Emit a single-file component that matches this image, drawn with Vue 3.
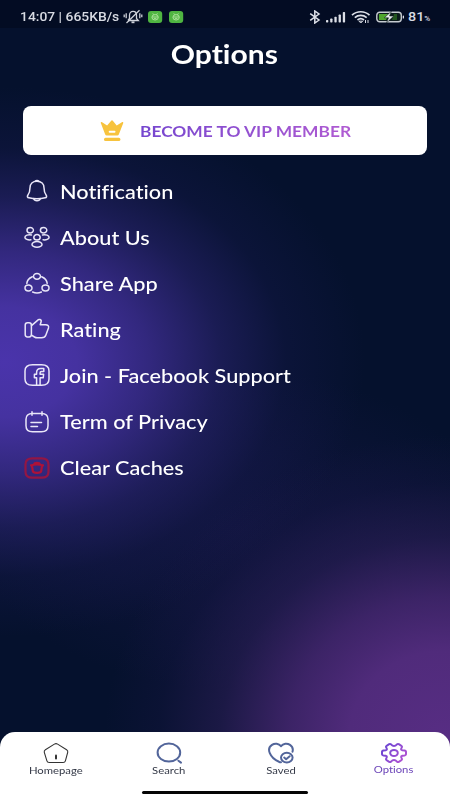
<template>
  <main class="tela">

    <!-- STATUS -->
    <header class="status">
      <div class="status__lado">
        <span class="status__hora">14:07 | 665KB/s</span>
        <svg class="status__mudo" width="20" height="16" viewBox="0 0 20 16" fill="none" stroke="#cfd2da" stroke-width="1.3">
          <path d="M5 11.5 6.5 9.5V6.2C6.5 3.8 8 2.4 10 2.4s3.5 1.4 3.5 3.8v3.3l1.8 2H5" />
          <path d="M8.5 13.3h3" stroke-width="1.8" />
          <path d="M3.5 14 16.5 1.2M3.2 4.2v5M1.2 5.5v2.7M16.8 4.2v5M18.8 5.5v2.7" />
        </svg>
        <svg v-for="n in 2" :key="n" class="status__app" width="15" height="12" viewBox="0 0 15 12">
          <rect width="14.2" height="12" rx="3" fill="#4fb541" />
          <g fill="none" stroke="#b4e5a3" stroke-width="0.9">
            <ellipse cx="7.1" cy="6.3" rx="3.2" ry="2.7" />
            <path d="M4.100 6h6M4.800 2.400l1 1.300M9.400 2.400l-1 1.300M5.800 7.400h2.600" />
          </g>
        </svg>
      </div>

      <div class="status__lado">
        <svg width="12" height="14" viewBox="0 0 12 14" fill="none" stroke="#dcdfe7" stroke-width="1.5">
          <path d="M1.2 3.6 10 10 5.8 13V1L10 4 1.2 10.4" />
        </svg>
        <svg class="status__sinal" width="20" height="12" viewBox="0 0 20 12" fill="#dcdfe7">
          <rect x="0" y="9" width="2.3" height="2.5" rx="0.7" />
          <rect x="4.2" y="7.6" width="2.3" height="3.9" rx="0.7" />
          <rect x="8.4" y="5.8" width="2.3" height="5.7" rx="0.7" />
          <rect x="12.6" y="3.5" width="2.3" height="8" rx="0.7" />
          <rect x="16.8" y="1" width="2.3" height="10.5" rx="0.7" />
        </svg>
        <svg class="status__wifi" width="20" height="14" viewBox="0 0 20 14" fill="none" stroke="#dcdfe7" stroke-width="1.7">
          <path d="M1 5.2c5-4.6 12.5-4.6 17.5 0M3.8 7.7c3.5-3 8.4-3 11.9 0M6.5 10c2-1.6 4.5-1.6 6.5 0" />
          <path d="M8 11.2h3.6l-1.8 1.8zM14.5 10v3M17 10v3" stroke-width="1" />
        </svg>
        <svg class="status__bateria" width="29" height="12" viewBox="0 0 29 12">
          <rect x="0.8" y="1.2" width="24.5" height="9.6" rx="3" fill="#0c1b1c" stroke="#c6cbd1" stroke-width="1.4" />
          <path d="M3 3h10l-3 6H3z" fill="#4fa52d" />
          <path d="M18 3h3v6h-5z" fill="#23561f" />
          <path d="M15.5.2 8.3 6.8h4.2L10.4 12l7.4-7h-4.2z" fill="#eef2f2" stroke="#0c1b1c" stroke-width="0.6" />
          <rect x="26.7" y="4.5" width="1.3" height="3" rx="0.6" fill="#dcdfe7" />
        </svg>
        <span class="status__carga">81<small>%</small></span>
      </div>
    </header>

    <h1 class="titulo"><span>Options</span></h1>

    <!-- VIP -->
    <button class="vip">
      <svg width="24" height="22" viewBox="0 0 24 22" fill="#f7c33e">
        <path d="M1 3.5c-.8-1 .2-2 1.1-1.3l5 3.4L11 1c.6-.9 1.4-.9 2 0l3.7 4.6 5.2-3.4c1-.6 1.8.2 1.2 1.3l-4.2 10.8c-.3.8-.8 1.2-1.6 1.2H6.7c-.8 0-1.3-.4-1.6-1.2z" />
        <rect x="4" y="17.7" width="16.4" height="3.2" rx="1.5" />
        <rect x="8.7" y="10.8" width="6.8" height="1.9" rx="0.9" fill="#fff" />
      </svg>
      <span class="vip__texto">BECOME TO VIP MEMBER</span>
    </button>

    <!-- MENU -->
    <ul class="menu">
      <li v-for="item in itens" :key="item.nome" class="menu__item">
        <svg class="menu__icone" :class="{ 'menu__icone--perigo': item.perigo }" width="28" height="24" viewBox="0 0 28 24">
          <path v-for="d in item.tracos" :key="d" :d="d" />
        </svg>
        <span class="menu__nome">{{ item.nome }}</span>
      </li>
    </ul>

    <!-- NAVEGAÇÃO -->
    <nav class="nav">
      <div class="nav__abas">
        <a v-for="aba in abas" :key="aba.nome" class="aba" :class="'aba--' + aba.tipo">
          <svg width="28" height="22" viewBox="0 0 28 22">
            <defs v-if="aba.tipo === 'ativa'">
              <linearGradient id="roxo" gradientUnits="userSpaceOnUse" x1="3" y1="2" x2="25" y2="20">
                <stop offset="0" stop-color="#6543d2" />
                <stop offset="1" stop-color="#b855d3" />
              </linearGradient>
            </defs>
            <path v-for="d in aba.tracos" :key="d" :d="d" />
          </svg>
          <span>{{ aba.nome }}</span>
        </a>
      </div>
      <div class="nav__barra"></div>
    </nav>

  </main>
</template>

<script setup>
const itens = [
  {
    nome: "Notification",
    tracos: [
      "M14 2.2c-4.4 0-7 2.8-7 6.6 0 4-.7 5.5-2.2 7.4-.9 1.2-.3 2.3 1 2.6 5.2 1.2 11.2 1.2 16.4 0 1.3-.3 1.9-1.4 1-2.6C21.7 14.3 21 12.8 21 8.8c0-3.8-2.6-6.6-7-6.6z",
      "M10.6 19.6c.5 1.5 1.8 2.2 3.4 2.2s2.9-.7 3.4-2.2",
      "M12.3 2.1c.6-.8 2.8-.8 3.4 0"
    ]
  },
  {
    nome: "About Us",
    tracos: [
      "M4 5.2a3.2 2.7 0 1 0 6.4 0a3.2 2.7 0 1 0-6.4 0",
      "M17.4 5.2a3.2 2.7 0 1 0 6.4 0a3.2 2.7 0 1 0-6.4 0",
      "M10.8 12.3a3.2 2.8 0 1 0 6.4 0a3.2 2.8 0 1 0-6.4 0",
      "M9 19.4a5 2.8 0 1 0 10 0a5 2.8 0 1 0-10 0",
      "M8.5 9.9c-3.4-.7-6.6.5-6.6 2.4s3 2.9 6 2.5",
      "M19.5 9.9c3.4-.7 6.6.5 6.6 2.4s-3 2.9-6 2.5"
    ]
  },
  {
    nome: "Share App",
    tracos: [
      "M10.5 5.3a3.5 2.9 0 1 0 7 0a3.5 2.9 0 1 0-7 0",
      "M2 17a3.5 2.9 0 1 0 7 0a3.5 2.9 0 1 0-7 0",
      "M19 17a3.5 2.9 0 1 0 7 0a3.5 2.9 0 1 0-7 0",
      "M9.3 5.7C6.1 7.1 4.1 9.3 3.8 12.4",
      "M18.7 5.7c3.2 1.4 5.2 3.6 5.5 6.7",
      "M9.6 21c2.8 1.2 6 1.2 8.8 0"
    ]
  },
  {
    nome: "Rating",
    tracos: [
      "M2.2 8.2c0-1.7.6-2.4 2.3-2.4h1.6c1.6 0 2.3.7 2.3 2.4v9.4c0 1.7-.7 2.4-2.3 2.4H4.5c-1.7 0-2.3-.7-2.3-2.4z",
      "M8.5 8.6 14.3 3.6C15.8 1.6 18.8 2.4 18.1 4.8L17.2 7.7h5.3c2.2 0 3.6 1.2 3 3.2l-2.6 7.1c-.6 1.8-2 2.8-4.3 2.8h-4.3c-1 0-2-.3-2.8-.8l-3-1.8"
    ]
  },
  {
    nome: "Join - Facebook Support",
    tracos: [
      "M9.5 1.8h9c5.2 0 7.5 1.9 7.5 6.3v7.8c0 4.4-2.3 6.3-7.5 6.3h-9C4.3 22.2 2 20.3 2 15.9V8.1c0-4.4 2.3-6.3 7.5-6.3z",
      "M13.6 22v-7.2h-2.2v-3.5h2.2V9.6c0-2.7 1.5-4 4.2-4h3v3h-2.3c-1 0-1.4.4-1.4 1.3v1.4h3.5l-.4 3.5h-3.1V22"
    ]
  },
  {
    nome: "Term of Privacy",
    tracos: [
      "M9.5 3.4h9c4.6 0 6.5 2 6.5 5.8v6.6c0 4-2 6-6.5 6h-9c-4.5 0-6.5-2-6.5-6V9.2c0-3.8 1.9-5.8 6.5-5.8z",
      "M9 1.7v3.6M19 1.7v3.6",
      "M8 12.6h10.5M8 16.4h6.5"
    ]
  },
  {
    nome: "Clear Caches",
    perigo: true,
    tracos: [
      "M9.5 2.3h9c4.9 0 7 1.9 7 6v7.4c0 4.1-2.1 6-7 6h-9c-4.9 0-7-1.9-7-6V8.3c0-4.1 2.1-6 7-6z",
      "M8 9.4c4-1.2 8-1.2 12 0M11.2 8.2c.3-1.8 5.3-1.8 5.6 0M9 9.8l.8 5.2c.4 2.4 8 2.4 8.4 0l.8-5.2"
    ]
  }
];

const abas = [
  {
    nome: "Homepage",
    tipo: "inicio",
    tracos: [
      "M12.4 2.1c1-.6 2.2-.6 3.2 0l9 5.6c1 .6 1.4 1.5 1.1 2.6l-2.3 8.5c-.3 1.2-1 1.7-2.3 1.7H7.2c-1.3 0-2-.5-2.3-1.7L2.3 10.3C2 9.2 2.4 8.3 3.4 7.7z",
      "M14 13.6v3"
    ]
  },
  {
    nome: "Search",
    tipo: "busca",
    tracos: [
      "M2.6 10.6a11.3 9 0 1 0 22.6 0a11.3 9 0 1 0-22.6 0",
      "M23.4 18.7l2.6 1.9"
    ]
  },
  {
    nome: "Saved",
    tipo: "salvos",
    tracos: [
      "M14 4.2C11.8 1.4 7.8 1 5 2.9 1.8 5 1.6 8.3 2.8 11.2c1.6 3.9 6 7.3 9.2 8.6.6.3 1.3.4 2 .4M14 4.2c2.2-2.8 6.2-3.2 9-1.3 2.4 1.6 3.2 4.4 2.5 6.8",
      "M14 15.6a5.8 4.8 0 1 0 11.6 0a5.8 4.8 0 1 0-11.6 0",
      "M17.2 15.6l1.9 1.6 3.6-3"
    ]
  },
  {
    nome: "Options",
    tipo: "ativa",
    tracos: [
      "M10.2 11a3.8 3.1 0 1 0 7.6 0a3.8 3.1 0 1 0-7.6 0",
      "M21.2 7.6Q20.8 7 21.9 5.2Q22.3 4.4 21.4 3.8L18.8 2.2Q17.8 1.7 17 2.3Q15.5 4 14 4Q12.5 4 11 2.3Q10.2 1.7 9.2 2.2L6.6 3.8Q5.7 4.4 6.1 5.2Q7.2 7 6.8 7.6Q6 8.6 3.4 8.6Q2.2 8.7 2 9.7V12.3Q2.2 13.3 3.400 13.400Q6 13.400 6.800 14.400Q7.200 15 6.100 16.800Q5.700 17.600 6.600 18.200L9.200 19.800Q10.200 20.300 11 19.700Q12.500 18 14 18Q15.500 18 17 19.700Q17.800 20.300 18.800 19.800L21.400 18.200Q22.300 17.600 21.900 16.800Q20.800 15 21.200 14.400Q22 13.400 24.600 13.400Q25.800 13.300 26 12.300V9.700Q25.800 8.700 24.600 8.600Q22 8.600 21.200 7.600z"
    ]
  }
];
</script>

<style>
body {
  background: #04102c;
}
</style>

<style scoped>
/* BASE */
.tela {
  display: flex;
  flex-direction: column;
  height: 800px;
  overflow: hidden;
  color: #fff;
  font-family: "Lato", "Noto Sans", sans-serif;
  font-variant-ligatures: none;
  background:
    radial-gradient(ellipse 340px 300px at 445px 735px, #572d83 0%, #502b7b 28%, rgba(70, 39, 113, 0.84) 46%, rgba(48, 32, 92, 0.52) 66%, rgba(30, 24, 76, 0.24) 84%, rgba(24, 22, 65, 0) 100%),
    radial-gradient(ellipse 360px 275px at 5px 362px, #4a34ab 0%, #4532a0 20%, rgba(60, 45, 144, 0.82) 40%, rgba(44, 37, 116, 0.55) 60%, rgba(28, 28, 88, 0.28) 78%, rgba(24, 26, 75, 0) 100%),
    radial-gradient(ellipse 260px 160px at 235px 530px, rgba(26, 24, 76, 0.5) 0%, rgba(26, 24, 76, 0.3) 50%, rgba(26, 24, 76, 0) 100%),
    #05112d;
}

/* STATUS */
.status {
  display: flex;
  flex: none;
  justify-content: space-between;
  height: 28px;
  padding: 6px 20px 0;
  box-sizing: border-box;
  color: #d8dbe3;
  background: rgba(2, 7, 26, 0.5);
  font: 500 12px/22px "Roboto", sans-serif;
}

.status__lado {
  display: flex;
  align-items: center;
  height: 22px;
}

.status__hora {
  width: 103px;
  white-space: nowrap;
  transform: scaleX(1.155);
  transform-origin: left;
}

.status__app {
  margin-left: 5.3px;
}

.status__sinal {
  margin-left: 5px;
}

.status__wifi {
  margin-left: 5px;
}

.status__bateria {
  margin-left: 5px;
}

.status__carga {
  width: 22px;
  margin-left: 3px;
  font-size: 12.5px;
  white-space: nowrap;
  transform: translateY(1px) scaleX(1.15);
  transform-origin: left;
}

.status__carga small {
  font-size: 7px;
}

/* TITULO */
.titulo {
  margin: 9px 0 0;
  font-size: 26px;
  line-height: 34px;
  font-weight: 700;
  text-align: center;
}

.titulo span {
  display: inline-block;
  margin-right: 1px;
  transform: scaleX(1.155);
}

/* VIP */
.vip {
  display: flex;
  flex: none;
  align-items: center;
  height: 49px;
  margin: 35px 23px 0;
  padding: 0 0 0 77px;
  border: none;
  border-radius: 8px;
  background: #fff;
  font-family: inherit;
}

.vip__texto {
  margin-left: 16px;
  font-size: 15px;
  line-height: 20px;
  font-weight: 700;
  white-space: nowrap;
  color: transparent;
  background: linear-gradient(90deg, #7546cf, #b05bd2);
  background-clip: text;
  transform: scaleX(1.157);
  transform-origin: left;
}

/* MENU */
.menu {
  flex: 1;
  margin: 13px 0 0;
  padding: 0 23px;
  list-style: none;
}

.menu__item {
  display: flex;
  align-items: center;
  height: 46.1px;
}

.menu__icone {
  fill: none;
  stroke: #e9e6f8;
  stroke-width: 1.5;
  stroke-linecap: round;
  stroke-linejoin: round;
}

.menu__icone--perigo {
  stroke: #931644;
  stroke-width: 2.2;
}

.menu__icone--perigo path:last-child {
  stroke: #ad1238;
}

.menu__nome {
  margin-left: 9px;
  font-size: 19px;
  font-weight: 500;
  white-space: nowrap;
  transform: scaleX(1.143);
  transform-origin: left;
}

/* NAVEGACAO */
.nav {
  flex: none;
  height: 68px;
  border-radius: 15px 15px 0 0;
  background: #fff;
}

.nav__abas {
  display: flex;
  height: 58px;
}

.aba {
  display: flex;
  flex: 1;
  flex-direction: column;
  align-items: center;
  padding-top: 10px;
  color: #343947;
}

.aba svg {
  fill: none;
  stroke: #52659a;
  stroke-width: 2;
  stroke-linecap: round;
  stroke-linejoin: round;
}

.aba span {
  font-size: 10px;
  line-height: 13px;
  transform: scaleX(1.13);
}

.aba--inicio svg {
  stroke: #333;
  stroke-width: 1.1;
}

.aba--inicio path:last-child {
  stroke-width: 2;
}

.aba--ativa {
  color: #6c45b8;
}

.aba--ativa svg {
  stroke: url(#roxo);
}

.aba--ativa span {
  margin-top: -1px;
}

.nav__barra {
  width: 166px;
  height: 3px;
  margin: 1px auto 0;
  border-radius: 2px;
  background: #050505;
}
</style>
